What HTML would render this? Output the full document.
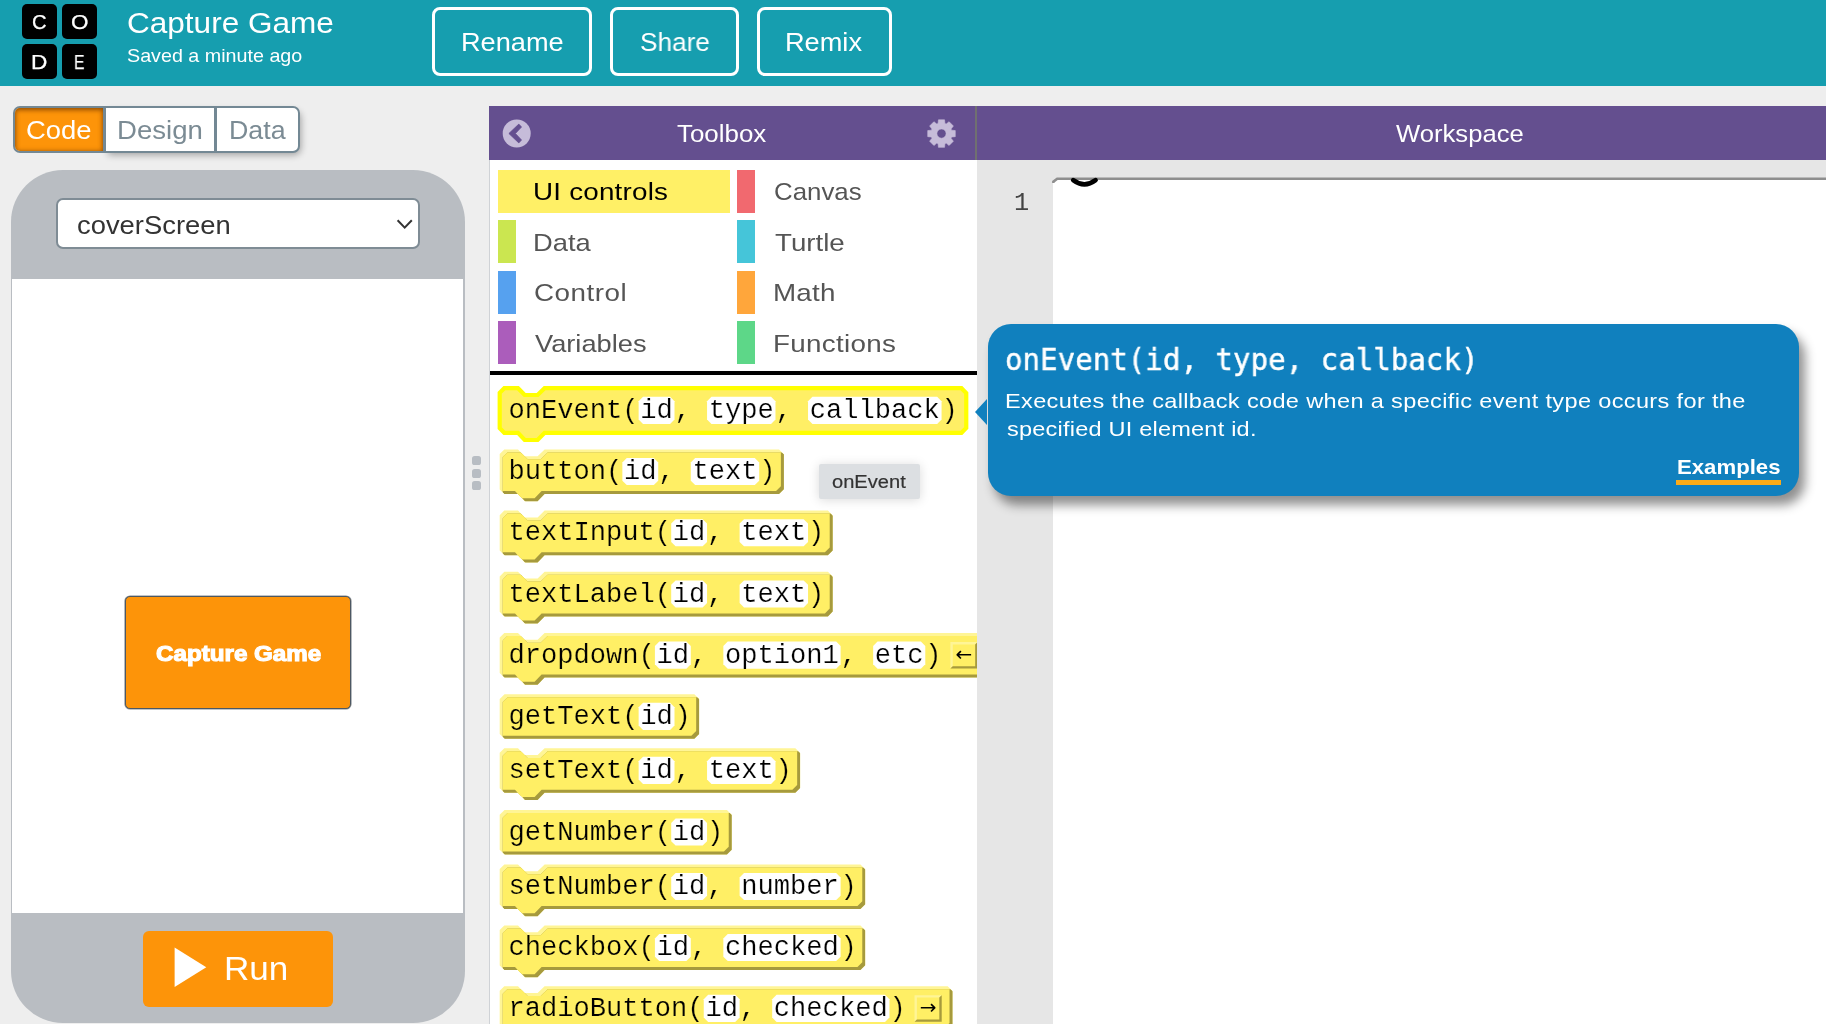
<!DOCTYPE html>
<html lang="en">
<head>
<meta charset="utf-8">
<title>Capture Game - App Lab</title>
<style>
html,body{margin:0;padding:0}
body{width:1826px;height:1024px;overflow:hidden;background:#eeeeee;position:relative;font-family:"Liberation Sans",sans-serif}
.abs{position:absolute}
.t{position:absolute;white-space:pre;line-height:1;display:block;transform-origin:0 0;will-change:transform}
.sans,.sansb{font-family:'Liberation Sans',sans-serif}
.mono{font-family:'Liberation Mono',monospace}
.dmono{font-family:'DejaVu Sans Mono','Liberation Mono',monospace}
.dsans{font-family:'DejaVu Sans','Liberation Sans',sans-serif}
#header{position:absolute;left:0;top:0;width:1826px;height:86.4px;background:#169eaf}
.logo-sq{position:absolute;width:35.7px;height:35.7px;background:#000;border-radius:5px}
.hbtn{position:absolute;top:7.1px;height:62.6px;border:3px solid #fff;border-radius:8px;box-sizing:content-box}
#tabs{position:absolute;left:13.2px;top:106.4px;width:286.6px;height:46.3px;box-sizing:border-box;border:2px solid #738894;border-radius:7px;background:#fff;overflow:hidden}
#tabshadow{position:absolute;left:106px;top:108px;width:193px;height:44px;border-radius:0 7px 7px 0;box-shadow:2px 3px 7px rgba(0,0,0,.32)}
#tab-code{position:absolute;left:0;top:0;width:88.2px;height:100%;background:#fd9409;box-shadow:inset 0 2px 5px rgba(105,50,0,.62),inset 0 0 5px rgba(105,50,0,.38)}
.tabdiv{position:absolute;top:0;width:2.4px;height:100%;background:#738894}
#phone{position:absolute;left:10.6px;top:169.7px;width:454.6px;height:852.9px;background:#b9bdc2;border-radius:52px}
#screen{position:absolute;left:12.4px;top:278.8px;width:451.1px;height:634px;background:#fff}
#sel{position:absolute;left:56.1px;top:198.4px;width:363.6px;height:50.2px;box-sizing:border-box;border:2px solid #7f8c95;border-radius:7px;background:#fff}
#capbtn{position:absolute;left:125.1px;top:596px;width:225.8px;height:113px;box-sizing:border-box;border:1px solid #4d5863;border-radius:5px;background:#fd9409;box-shadow:0 0 0 0.6px rgba(77,88,99,.7)}
#runbtn{position:absolute;left:143.3px;top:930.9px;width:189.4px;height:76px;border-radius:6px;background:#fd9409}
#tbhead{position:absolute;left:488.8px;top:106.2px;width:486.6px;height:54.5px;background:#644f8f}
#wshead{position:absolute;left:977px;top:106.2px;width:964px;height:54.5px;background:#644f8f}
#hdiv{position:absolute;left:975.2px;top:106.2px;width:2px;height:54.5px;background:#707070}
#toolbox{position:absolute;left:489.6px;top:160.2px;width:487.6px;height:864px;background:#fff;overflow:hidden}
#tbline{position:absolute;left:488.8px;top:160px;width:1.2px;height:864px;background:#cfd2d6}
#gutter{position:absolute;left:977.2px;top:160.2px;width:849px;height:864px;background:#e6e6e6}
#editor{position:absolute;left:1052.7px;top:180px;width:780px;height:850px;background:#fff}
.cat{position:absolute;height:43.1px}
.dot{position:absolute;left:472px;width:9.2px;height:9px;border-radius:2.6px;background:#b8bdc3}
#tip{position:absolute;left:987.6px;top:324px;width:811.4px;height:171.6px;border-radius:23px;background:#1080be;box-shadow:6px 9px 11px rgba(0,0,0,.44)}
#tiparrow{position:absolute;left:975.4px;top:398.8px;width:0;height:0;border-top:13.2px solid transparent;border-bottom:13.2px solid transparent;border-right:12.4px solid #1080be}
#minitip{position:absolute;left:819.2px;top:464.0px;width:100.4px;height:34.7px;background:#dcdfe2;border-radius:2px;box-shadow:0 1px 11px rgba(0,0,0,.15)}
</style>
</head>
<body>

<header id="header">
<div class="logo-sq" style="left:21.5px;top:3.8px"></div>
<span class="t sans " style="left:31.60px;top:12.20px;font-size:20.20px;color:#fff;transform:scaleX(0.9901);-webkit-text-stroke:0.25px #fff;">C</span>
<div class="logo-sq" style="left:61.6px;top:3.8px"></div>
<span class="t sans " style="left:70.79px;top:12.20px;font-size:20.20px;color:#fff;transform:scaleX(1.1130);-webkit-text-stroke:0.25px #fff;">O</span>
<div class="logo-sq" style="left:21.5px;top:43.5px"></div>
<span class="t sans " style="left:31.28px;top:51.60px;font-size:20.20px;color:#fff;transform:scaleX(1.1232);-webkit-text-stroke:0.25px #fff;">D</span>
<div class="logo-sq" style="left:61.6px;top:43.5px"></div>
<span class="t sans " style="left:73.84px;top:51.60px;font-size:20.20px;color:#fff;transform:scaleX(0.7812);-webkit-text-stroke:0.25px #fff;">E</span>
<span class="t sans " style="left:127.02px;top:8.25px;font-size:30.30px;color:#fff;transform:scaleX(1.0409);">Capture Game</span>
<span class="t sans " style="left:127.21px;top:47.42px;font-size:18.40px;color:#fff;transform:scaleX(1.0715);">Saved a minute ago</span>
<div class="hbtn" style="left:432.4px;width:153.8px"></div>
<span class="t sans " style="left:460.93px;top:29.07px;font-size:26.50px;color:#fff;transform:scaleX(1.0252);">Rename</span>
<div class="hbtn" style="left:609.8px;width:123.6px"></div>
<span class="t sans " style="left:639.92px;top:29.07px;font-size:26.50px;color:#fff;transform:scaleX(0.9873);">Share</span>
<div class="hbtn" style="left:757.0px;width:129.4px"></div>
<span class="t sans " style="left:785.43px;top:29.07px;font-size:26.50px;color:#fff;transform:scaleX(1.0251);">Remix</span>
</header>
<section id="visualizationColumn">
<div id="tabshadow"></div><div id="tabs"><div id="tab-code"></div><div class="tabdiv" style="left:88.2px"></div><div class="tabdiv" style="left:199.1px"></div></div>
<span class="t sans " style="left:26.13px;top:118.28px;font-size:25.30px;color:#fff;transform:scaleX(1.0838);">Code</span>
<span class="t sans " style="left:116.99px;top:118.28px;font-size:25.30px;color:#7b8b94;transform:scaleX(1.0900);">Design</span>
<span class="t sans " style="left:228.95px;top:118.28px;font-size:25.30px;color:#7b8b94;transform:scaleX(1.0599);">Data</span>
<div id="phone"></div><div id="screen"></div>
<div id="sel"></div>
<span class="t sans " style="left:76.74px;top:212.45px;font-size:26.40px;color:#333;transform:scaleX(1.0372);">coverScreen</span>
<svg class="abs" style="left:394px;top:216px" width="22" height="16" viewBox="394 216 22 16"><path d="M397.6 220.2 L404.7 227.6 L411.8 220.2" fill="none" stroke="#333" stroke-width="2"/></svg>
<div id="capbtn"></div>
<span class="t sansb " style="left:155.63px;top:642.52px;font-size:21.60px;color:#fff;font-weight:bold;transform:scaleX(1.1193);-webkit-text-stroke:1.1px #fff;">Capture Game</span>
<div id="runbtn"></div>
<svg class="abs" style="left:170px;top:944px" width="40" height="48" viewBox="170 944 40 48"><path d="M174.6 947.6 L206.3 967.3 L174.6 987 Z" fill="#fff"/></svg>
<span class="t sans " style="left:223.99px;top:952.46px;font-size:33.60px;color:#fff;transform:scaleX(1.0443);">Run</span>
<div class="dot" style="top:456.4px"></div>
<div class="dot" style="top:468.8px"></div>
<div class="dot" style="top:481.2px"></div>
</section>
<section id="codeWorkspace">
<div id="tbhead"></div><div id="wshead"></div><div id="hdiv"></div>
<span class="t sans " style="left:677.08px;top:122.18px;font-size:24.60px;color:#fff;transform:scaleX(1.0527);">Toolbox</span>
<span class="t sans " style="left:1396.04px;top:121.68px;font-size:24.60px;color:#fff;transform:scaleX(1.0423);">Workspace</span>
<svg class="abs" style="left:500px;top:116px" width="460" height="36" viewBox="500 116 460 36">
<circle cx="516.7" cy="133.5" r="14" fill="#c6bcd9"/>
<path d="M508.9 133.5 L518.8 124.1 L521.5 127 L515.4 133.5 L521.5 140 L518.8 142.9 Z" fill="#644f8f" stroke="#644f8f" stroke-width="0.8" stroke-linejoin="round"/>
<path d="M938.07 123.57 L938.45 119.83 L944.55 119.83 L944.93 123.57 L946.16 124.08 L949.08 121.71 L953.39 126.02 L951.02 128.94 L951.53 130.17 L955.27 130.55 L955.27 136.65 L951.53 137.03 L951.02 138.26 L953.39 141.18 L949.08 145.49 L946.16 143.12 L944.93 143.63 L944.55 147.37 L938.45 147.37 L938.07 143.63 L936.84 143.12 L933.92 145.49 L929.61 141.18 L931.98 138.26 L931.47 137.03 L927.73 136.65 L927.73 130.55 L931.47 130.17 L931.98 128.94 L929.61 126.02 L933.92 121.71 L936.84 124.08 Z M946.10 133.60 A4.6 4.6 0 1 0 936.90 133.60 A4.6 4.6 0 1 0 946.10 133.60 Z" fill="#c6bcd9" fill-rule="evenodd" stroke="#c6bcd9" stroke-width="0.6" stroke-linejoin="round"/>
</svg>
<div id="toolbox">
<div class="cat" style="left:8.1px;top:9.5px;width:232.3px;background:#fff066"></div>
<span class="t sans " style="left:43.52px;top:19.86px;font-size:24.80px;letter-spacing:0.195px;color:#000;transform:scaleX(1.1200);">UI controls</span>
<div class="cat" style="left:247.6px;top:9.5px;width:17.9px;background:#f1696f"></div>
<span class="t sans " style="left:284.41px;top:19.86px;font-size:24.80px;color:#555;transform:scaleX(1.0419);">Canvas</span>
<div class="cat" style="left:8.1px;top:60.0px;width:17.9px;background:#cbe650"></div>
<span class="t sans " style="left:43.42px;top:70.36px;font-size:24.80px;color:#555;transform:scaleX(1.1011);">Data</span>
<div class="cat" style="left:247.6px;top:60.0px;width:17.9px;background:#45c5d9"></div>
<span class="t sans " style="left:285.15px;top:70.36px;font-size:24.80px;color:#555;transform:scaleX(1.1169);">Turtle</span>
<div class="cat" style="left:8.1px;top:110.4px;width:17.9px;background:#56a1ef"></div>
<span class="t sans " style="left:44.21px;top:120.86px;font-size:24.80px;letter-spacing:0.464px;color:#555;transform:scaleX(1.1200);">Control</span>
<div class="cat" style="left:247.6px;top:110.4px;width:17.9px;background:#ffa63b"></div>
<span class="t sans " style="left:283.48px;top:120.86px;font-size:24.80px;letter-spacing:0.186px;color:#555;transform:scaleX(1.1200);">Math</span>
<div class="cat" style="left:8.1px;top:160.9px;width:17.9px;background:#ab5dbb"></div>
<span class="t sans " style="left:45.53px;top:171.36px;font-size:24.80px;color:#555;transform:scaleX(1.0981);">Variables</span>
<div class="cat" style="left:247.6px;top:160.9px;width:17.9px;background:#5dd788"></div>
<span class="t sans " style="left:283.48px;top:171.36px;font-size:24.80px;letter-spacing:0.266px;color:#555;transform:scaleX(1.1200);">Functions</span>
<div class="abs" style="left:0;top:210.9px;width:488px;height:3.9px;background:#000"></div>
</div>
<div id="tbline"></div>
<svg class="abs" style="left:489.6px;top:375px;will-change:transform" width="487.6" height="649" viewBox="489.6 375 487.6 649" font-family='"Liberation Mono",monospace' font-size="27.13">
<defs>
<clipPath id="c0"><path d="M499.30 428.20 L499.30 392.80 L503.90 388.20 L517.60 388.20 L524.30 395.00 L537.20 395.00 L544.20 388.20 L961.06 388.20 L965.86 393.00 L965.86 428.00 L961.06 432.80 L544.20 432.80 L537.20 440.00 L524.30 440.00 L517.60 432.80 L503.90 432.80 L499.30 428.20 Z"/></clipPath><clipPath id="d0"><path d="M499.30 428.20 L499.30 392.80 L503.90 388.20 L517.60 388.20 L524.30 395.00 L537.20 395.00 L544.20 388.20 L961.06 388.20 L965.86 393.00 L965.86 428.00 L961.06 432.80 L544.20 432.80 L537.20 440.00 L524.30 440.00 L517.60 432.80 L503.90 432.80 L499.30 428.20 Z" transform="translate(3.0,3.0)"/></clipPath>
<clipPath id="c1"><path d="M499.30 489.40 L499.30 454.00 L503.90 449.40 L517.60 449.40 L524.30 456.20 L537.20 456.20 L544.20 449.40 L778.68 449.40 L783.48 454.20 L783.48 489.20 L778.68 494.00 L544.20 494.00 L537.20 501.20 L524.30 501.20 L517.60 494.00 L503.90 494.00 L499.30 489.40 Z"/></clipPath><clipPath id="d1"><path d="M499.30 489.40 L499.30 454.00 L503.90 449.40 L517.60 449.40 L524.30 456.20 L537.20 456.20 L544.20 449.40 L778.68 449.40 L783.48 454.20 L783.48 489.20 L778.68 494.00 L544.20 494.00 L537.20 501.20 L524.30 501.20 L517.60 494.00 L503.90 494.00 L499.30 489.40 Z" transform="translate(3.0,3.0)"/></clipPath>
<clipPath id="c2"><path d="M499.30 550.60 L499.30 515.20 L503.90 510.60 L517.60 510.60 L524.30 517.40 L537.20 517.40 L544.20 510.60 L827.52 510.60 L832.32 515.40 L832.32 550.40 L827.52 555.20 L544.20 555.20 L537.20 562.40 L524.30 562.40 L517.60 555.20 L503.90 555.20 L499.30 550.60 Z"/></clipPath><clipPath id="d2"><path d="M499.30 550.60 L499.30 515.20 L503.90 510.60 L517.60 510.60 L524.30 517.40 L537.20 517.40 L544.20 510.60 L827.52 510.60 L832.32 515.40 L832.32 550.40 L827.52 555.20 L544.20 555.20 L537.20 562.40 L524.30 562.40 L517.60 555.20 L503.90 555.20 L499.30 550.60 Z" transform="translate(3.0,3.0)"/></clipPath>
<clipPath id="c3"><path d="M499.30 611.80 L499.30 576.40 L503.90 571.80 L517.60 571.80 L524.30 578.60 L537.20 578.60 L544.20 571.80 L827.52 571.80 L832.32 576.60 L832.32 611.60 L827.52 616.40 L544.20 616.40 L537.20 623.60 L524.30 623.60 L517.60 616.40 L503.90 616.40 L499.30 611.80 Z"/></clipPath><clipPath id="d3"><path d="M499.30 611.80 L499.30 576.40 L503.90 571.80 L517.60 571.80 L524.30 578.60 L537.20 578.60 L544.20 571.80 L827.52 571.80 L832.32 576.60 L832.32 611.60 L827.52 616.40 L544.20 616.40 L537.20 623.60 L524.30 623.60 L517.60 616.40 L503.90 616.40 L499.30 611.80 Z" transform="translate(3.0,3.0)"/></clipPath>
<clipPath id="c4"><path d="M499.30 673.00 L499.30 637.60 L503.90 633.00 L517.60 633.00 L524.30 639.80 L537.20 639.80 L544.20 633.00 L983.18 633.00 L987.98 637.80 L987.98 672.80 L983.18 677.60 L544.20 677.60 L537.20 684.80 L524.30 684.80 L517.60 677.60 L503.90 677.60 L499.30 673.00 Z"/></clipPath><clipPath id="d4"><path d="M499.30 673.00 L499.30 637.60 L503.90 633.00 L517.60 633.00 L524.30 639.80 L537.20 639.80 L544.20 633.00 L983.18 633.00 L987.98 637.80 L987.98 672.80 L983.18 677.60 L544.20 677.60 L537.20 684.80 L524.30 684.80 L517.60 677.60 L503.90 677.60 L499.30 673.00 Z" transform="translate(3.0,3.0)"/></clipPath>
<clipPath id="c5"><path d="M499.30 734.00 L499.30 699.00 L504.10 694.20 L693.98 694.20 L698.78 699.00 L698.78 734.00 L693.98 738.80 L504.10 738.80 L499.30 734.00 Z"/></clipPath><clipPath id="d5"><path d="M499.30 734.00 L499.30 699.00 L504.10 694.20 L693.98 694.20 L698.78 699.00 L698.78 734.00 L693.98 738.80 L504.10 738.80 L499.30 734.00 Z" transform="translate(3.0,3.0)"/></clipPath>
<clipPath id="c6"><path d="M499.30 788.20 L499.30 752.80 L503.90 748.20 L517.60 748.20 L524.30 755.00 L537.20 755.00 L544.20 748.20 L794.96 748.20 L799.76 753.00 L799.76 788.00 L794.96 792.80 L544.20 792.80 L537.20 800.00 L524.30 800.00 L517.60 792.80 L503.90 792.80 L499.30 788.20 Z"/></clipPath><clipPath id="d6"><path d="M499.30 788.20 L499.30 752.80 L503.90 748.20 L517.60 748.20 L524.30 755.00 L537.20 755.00 L544.20 748.20 L794.96 748.20 L799.76 753.00 L799.76 788.00 L794.96 792.80 L544.20 792.80 L537.20 800.00 L524.30 800.00 L517.60 792.80 L503.90 792.80 L499.30 788.20 Z" transform="translate(3.0,3.0)"/></clipPath>
<clipPath id="c7"><path d="M499.30 849.70 L499.30 814.70 L504.10 809.90 L726.54 809.90 L731.34 814.70 L731.34 849.70 L726.54 854.50 L504.10 854.50 L499.30 849.70 Z"/></clipPath><clipPath id="d7"><path d="M499.30 849.70 L499.30 814.70 L504.10 809.90 L726.54 809.90 L731.34 814.70 L731.34 849.70 L726.54 854.50 L504.10 854.50 L499.30 849.70 Z" transform="translate(3.0,3.0)"/></clipPath>
<clipPath id="c8"><path d="M499.30 904.40 L499.30 869.00 L503.90 864.40 L517.60 864.40 L524.30 871.20 L537.20 871.20 L544.20 864.40 L860.08 864.40 L864.88 869.20 L864.88 904.20 L860.08 909.00 L544.20 909.00 L537.20 916.20 L524.30 916.20 L517.60 909.00 L503.90 909.00 L499.30 904.40 Z"/></clipPath><clipPath id="d8"><path d="M499.30 904.40 L499.30 869.00 L503.90 864.40 L517.60 864.40 L524.30 871.20 L537.20 871.20 L544.20 864.40 L860.08 864.40 L864.88 869.20 L864.88 904.20 L860.08 909.00 L544.20 909.00 L537.20 916.20 L524.30 916.20 L517.60 909.00 L503.90 909.00 L499.30 904.40 Z" transform="translate(3.0,3.0)"/></clipPath>
<clipPath id="c9"><path d="M499.30 965.40 L499.30 930.00 L503.90 925.40 L517.60 925.40 L524.30 932.20 L537.20 932.20 L544.20 925.40 L860.08 925.40 L864.88 930.20 L864.88 965.20 L860.08 970.00 L544.20 970.00 L537.20 977.20 L524.30 977.20 L517.60 970.00 L503.90 970.00 L499.30 965.40 Z"/></clipPath><clipPath id="d9"><path d="M499.30 965.40 L499.30 930.00 L503.90 925.40 L517.60 925.40 L524.30 932.20 L537.20 932.20 L544.20 925.40 L860.08 925.40 L864.88 930.20 L864.88 965.20 L860.08 970.00 L544.20 970.00 L537.20 977.20 L524.30 977.20 L517.60 970.00 L503.90 970.00 L499.30 965.40 Z" transform="translate(3.0,3.0)"/></clipPath>
<clipPath id="c10"><path d="M499.30 1026.20 L499.30 990.80 L503.90 986.20 L517.60 986.20 L524.30 993.00 L537.20 993.00 L544.20 986.20 L947.32 986.20 L952.12 991.00 L952.12 1026.00 L947.32 1030.80 L544.20 1030.80 L537.20 1038.00 L524.30 1038.00 L517.60 1030.80 L503.90 1030.80 L499.30 1026.20 Z"/></clipPath><clipPath id="d10"><path d="M499.30 1026.20 L499.30 990.80 L503.90 986.20 L517.60 986.20 L524.30 993.00 L537.20 993.00 L544.20 986.20 L947.32 986.20 L952.12 991.00 L952.12 1026.00 L947.32 1030.80 L544.20 1030.80 L537.20 1038.00 L524.30 1038.00 L517.60 1030.80 L503.90 1030.80 L499.30 1026.20 Z" transform="translate(3.0,3.0)"/></clipPath>
</defs>
<g>
<path d="M499.30 428.20 L499.30 392.80 L503.90 388.20 L517.60 388.20 L524.30 395.00 L537.20 395.00 L544.20 388.20 L961.06 388.20 L965.86 393.00 L965.86 428.00 L961.06 432.80 L544.20 432.80 L537.20 440.00 L524.30 440.00 L517.60 432.80 L503.90 432.80 L499.30 428.20 Z" fill="#ffef65" stroke="#ffff00" stroke-width="4.2" stroke-linejoin="miter"/>
<text x="508.00" y="418.00" fill="#000" stroke="#ffef65" stroke-width="0.2" xml:space="preserve">onEvent(</text>
<path d="M642.64 396.80 L669.70 396.80 L674.10 401.20 L674.10 419.50 L669.70 423.90 L642.64 423.90 L638.24 419.50 L638.24 401.20 Z" fill="#fff"/>
<text x="639.89" y="418.00" fill="#000" stroke="#fff" stroke-width="0.2">id</text>
<text x="674.10" y="418.00" fill="#000" stroke="#ffef65" stroke-width="0.2" xml:space="preserve">, </text>
<path d="M711.06 396.80 L770.68 396.80 L775.08 401.20 L775.08 419.50 L770.68 423.90 L711.06 423.90 L706.66 419.50 L706.66 401.20 Z" fill="#fff"/>
<text x="708.31" y="418.00" fill="#000" stroke="#fff" stroke-width="0.2">type</text>
<text x="775.08" y="418.00" fill="#000" stroke="#ffef65" stroke-width="0.2" xml:space="preserve">, </text>
<path d="M812.04 396.80 L936.78 396.80 L941.18 401.20 L941.18 419.50 L936.78 423.90 L812.04 423.90 L807.64 419.50 L807.64 401.20 Z" fill="#fff"/>
<text x="809.29" y="418.00" fill="#000" stroke="#fff" stroke-width="0.2">callback</text>
<text x="941.18" y="418.00" fill="#000" stroke="#ffef65" stroke-width="0.2" xml:space="preserve">)</text>
</g>
<g>
<path d="M499.30 489.40 L499.30 454.00 L503.90 449.40 L517.60 449.40 L524.30 456.20 L537.20 456.20 L544.20 449.40 L778.68 449.40 L783.48 454.20 L783.48 489.20 L778.68 494.00 L544.20 494.00 L537.20 501.20 L524.30 501.20 L517.60 494.00 L503.90 494.00 L499.30 489.40 Z" fill="#fff596"/>
<g clip-path="url(#c1)"><path d="M499.30 489.40 L499.30 454.00 L503.90 449.40 L517.60 449.40 L524.30 456.20 L537.20 456.20 L544.20 449.40 L778.68 449.40 L783.48 454.20 L783.48 489.20 L778.68 494.00 L544.20 494.00 L537.20 501.20 L524.30 501.20 L517.60 494.00 L503.90 494.00 L499.30 489.40 Z" transform="translate(3.0,3.0)" fill="#a69a3d"/></g>
<g clip-path="url(#d1)"><path d="M499.30 489.40 L499.30 454.00 L503.90 449.40 L517.60 449.40 L524.30 456.20 L537.20 456.20 L544.20 449.40 L778.68 449.40 L783.48 454.20 L783.48 489.20 L778.68 494.00 L544.20 494.00 L537.20 501.20 L524.30 501.20 L517.60 494.00 L503.90 494.00 L499.30 489.40 Z" transform="translate(-3.0,-3.0)" fill="#ffef65"/></g>
<text x="508.00" y="479.20" fill="#000" stroke="#ffef65" stroke-width="0.2" xml:space="preserve">button(</text>
<path d="M626.36 458.00 L653.42 458.00 L657.82 462.40 L657.82 480.70 L653.42 485.10 L626.36 485.10 L621.96 480.70 L621.96 462.40 Z" fill="#fff"/>
<text x="623.61" y="479.20" fill="#000" stroke="#fff" stroke-width="0.2">id</text>
<text x="657.82" y="479.20" fill="#000" stroke="#ffef65" stroke-width="0.2" xml:space="preserve">, </text>
<path d="M694.78 458.00 L754.40 458.00 L758.80 462.40 L758.80 480.70 L754.40 485.10 L694.78 485.10 L690.38 480.70 L690.38 462.40 Z" fill="#fff"/>
<text x="692.03" y="479.20" fill="#000" stroke="#fff" stroke-width="0.2">text</text>
<text x="758.80" y="479.20" fill="#000" stroke="#ffef65" stroke-width="0.2" xml:space="preserve">)</text>
</g>
<g>
<path d="M499.30 550.60 L499.30 515.20 L503.90 510.60 L517.60 510.60 L524.30 517.40 L537.20 517.40 L544.20 510.60 L827.52 510.60 L832.32 515.40 L832.32 550.40 L827.52 555.20 L544.20 555.20 L537.20 562.40 L524.30 562.40 L517.60 555.20 L503.90 555.20 L499.30 550.60 Z" fill="#fff596"/>
<g clip-path="url(#c2)"><path d="M499.30 550.60 L499.30 515.20 L503.90 510.60 L517.60 510.60 L524.30 517.40 L537.20 517.40 L544.20 510.60 L827.52 510.60 L832.32 515.40 L832.32 550.40 L827.52 555.20 L544.20 555.20 L537.20 562.40 L524.30 562.40 L517.60 555.20 L503.90 555.20 L499.30 550.60 Z" transform="translate(3.0,3.0)" fill="#a69a3d"/></g>
<g clip-path="url(#d2)"><path d="M499.30 550.60 L499.30 515.20 L503.90 510.60 L517.60 510.60 L524.30 517.40 L537.20 517.40 L544.20 510.60 L827.52 510.60 L832.32 515.40 L832.32 550.40 L827.52 555.20 L544.20 555.20 L537.20 562.40 L524.30 562.40 L517.60 555.20 L503.90 555.20 L499.30 550.60 Z" transform="translate(-3.0,-3.0)" fill="#ffef65"/></g>
<text x="508.00" y="540.40" fill="#000" stroke="#ffef65" stroke-width="0.2" xml:space="preserve">textInput(</text>
<path d="M675.20 519.20 L702.26 519.20 L706.66 523.60 L706.66 541.90 L702.26 546.30 L675.20 546.30 L670.80 541.90 L670.80 523.60 Z" fill="#fff"/>
<text x="672.45" y="540.40" fill="#000" stroke="#fff" stroke-width="0.2">id</text>
<text x="706.66" y="540.40" fill="#000" stroke="#ffef65" stroke-width="0.2" xml:space="preserve">, </text>
<path d="M743.62 519.20 L803.24 519.20 L807.64 523.60 L807.64 541.90 L803.24 546.30 L743.62 546.30 L739.22 541.90 L739.22 523.60 Z" fill="#fff"/>
<text x="740.87" y="540.40" fill="#000" stroke="#fff" stroke-width="0.2">text</text>
<text x="807.64" y="540.40" fill="#000" stroke="#ffef65" stroke-width="0.2" xml:space="preserve">)</text>
</g>
<g>
<path d="M499.30 611.80 L499.30 576.40 L503.90 571.80 L517.60 571.80 L524.30 578.60 L537.20 578.60 L544.20 571.80 L827.52 571.80 L832.32 576.60 L832.32 611.60 L827.52 616.40 L544.20 616.40 L537.20 623.60 L524.30 623.60 L517.60 616.40 L503.90 616.40 L499.30 611.80 Z" fill="#fff596"/>
<g clip-path="url(#c3)"><path d="M499.30 611.80 L499.30 576.40 L503.90 571.80 L517.60 571.80 L524.30 578.60 L537.20 578.60 L544.20 571.80 L827.52 571.80 L832.32 576.60 L832.32 611.60 L827.52 616.40 L544.20 616.40 L537.20 623.60 L524.30 623.60 L517.60 616.40 L503.90 616.40 L499.30 611.80 Z" transform="translate(3.0,3.0)" fill="#a69a3d"/></g>
<g clip-path="url(#d3)"><path d="M499.30 611.80 L499.30 576.40 L503.90 571.80 L517.60 571.80 L524.30 578.60 L537.20 578.60 L544.20 571.80 L827.52 571.80 L832.32 576.60 L832.32 611.60 L827.52 616.40 L544.20 616.40 L537.20 623.60 L524.30 623.60 L517.60 616.40 L503.90 616.40 L499.30 611.80 Z" transform="translate(-3.0,-3.0)" fill="#ffef65"/></g>
<text x="508.00" y="601.60" fill="#000" stroke="#ffef65" stroke-width="0.2" xml:space="preserve">textLabel(</text>
<path d="M675.20 580.40 L702.26 580.40 L706.66 584.80 L706.66 603.10 L702.26 607.50 L675.20 607.50 L670.80 603.10 L670.80 584.80 Z" fill="#fff"/>
<text x="672.45" y="601.60" fill="#000" stroke="#fff" stroke-width="0.2">id</text>
<text x="706.66" y="601.60" fill="#000" stroke="#ffef65" stroke-width="0.2" xml:space="preserve">, </text>
<path d="M743.62 580.40 L803.24 580.40 L807.64 584.80 L807.64 603.10 L803.24 607.50 L743.62 607.50 L739.22 603.10 L739.22 584.80 Z" fill="#fff"/>
<text x="740.87" y="601.60" fill="#000" stroke="#fff" stroke-width="0.2">text</text>
<text x="807.64" y="601.60" fill="#000" stroke="#ffef65" stroke-width="0.2" xml:space="preserve">)</text>
</g>
<g>
<path d="M499.30 673.00 L499.30 637.60 L503.90 633.00 L517.60 633.00 L524.30 639.80 L537.20 639.80 L544.20 633.00 L983.18 633.00 L987.98 637.80 L987.98 672.80 L983.18 677.60 L544.20 677.60 L537.20 684.80 L524.30 684.80 L517.60 677.60 L503.90 677.60 L499.30 673.00 Z" fill="#fff596"/>
<g clip-path="url(#c4)"><path d="M499.30 673.00 L499.30 637.60 L503.90 633.00 L517.60 633.00 L524.30 639.80 L537.20 639.80 L544.20 633.00 L983.18 633.00 L987.98 637.80 L987.98 672.80 L983.18 677.60 L544.20 677.60 L537.20 684.80 L524.30 684.80 L517.60 677.60 L503.90 677.60 L499.30 673.00 Z" transform="translate(3.0,3.0)" fill="#a69a3d"/></g>
<g clip-path="url(#d4)"><path d="M499.30 673.00 L499.30 637.60 L503.90 633.00 L517.60 633.00 L524.30 639.80 L537.20 639.80 L544.20 633.00 L983.18 633.00 L987.98 637.80 L987.98 672.80 L983.18 677.60 L544.20 677.60 L537.20 684.80 L524.30 684.80 L517.60 677.60 L503.90 677.60 L499.30 673.00 Z" transform="translate(-3.0,-3.0)" fill="#ffef65"/></g>
<text x="508.00" y="662.80" fill="#000" stroke="#ffef65" stroke-width="0.2" xml:space="preserve">dropdown(</text>
<path d="M658.92 641.60 L685.98 641.60 L690.38 646.00 L690.38 664.30 L685.98 668.70 L658.92 668.70 L654.52 664.30 L654.52 646.00 Z" fill="#fff"/>
<text x="656.17" y="662.80" fill="#000" stroke="#fff" stroke-width="0.2">id</text>
<text x="690.38" y="662.80" fill="#000" stroke="#ffef65" stroke-width="0.2" xml:space="preserve">, </text>
<path d="M727.34 641.60 L835.80 641.60 L840.20 646.00 L840.20 664.30 L835.80 668.70 L727.34 668.70 L722.94 664.30 L722.94 646.00 Z" fill="#fff"/>
<text x="724.59" y="662.80" fill="#000" stroke="#fff" stroke-width="0.2">option1</text>
<text x="840.20" y="662.80" fill="#000" stroke="#ffef65" stroke-width="0.2" xml:space="preserve">, </text>
<path d="M877.16 641.60 L920.50 641.60 L924.90 646.00 L924.90 664.30 L920.50 668.70 L877.16 668.70 L872.76 664.30 L872.76 646.00 Z" fill="#fff"/>
<text x="874.41" y="662.80" fill="#000" stroke="#fff" stroke-width="0.2">etc</text>
<text x="924.90" y="662.80" fill="#000" stroke="#ffef65" stroke-width="0.2" xml:space="preserve">)</text>
<rect x="949.98" y="642.00" width="27.20" height="26.60" fill="#ffef65"/>
<path d="M949.98 668.60 L949.98 642.00 L977.18 642.00 L974.78 644.40 L952.38 644.40 L952.38 666.20 Z" fill="#fff596"/>
<path d="M949.98 668.60 L977.18 668.60 L977.18 642.00 L974.78 644.40 L974.78 666.20 L952.38 666.20 Z" fill="#a69a3d"/>
<text x="963.58" y="661.20" text-anchor="middle" font-family='"DejaVu Sans",sans-serif' font-size="20" fill="#000">←</text>
</g>
<g>
<path d="M499.30 734.00 L499.30 699.00 L504.10 694.20 L693.98 694.20 L698.78 699.00 L698.78 734.00 L693.98 738.80 L504.10 738.80 L499.30 734.00 Z" fill="#fff596"/>
<g clip-path="url(#c5)"><path d="M499.30 734.00 L499.30 699.00 L504.10 694.20 L693.98 694.20 L698.78 699.00 L698.78 734.00 L693.98 738.80 L504.10 738.80 L499.30 734.00 Z" transform="translate(3.0,3.0)" fill="#a69a3d"/></g>
<g clip-path="url(#d5)"><path d="M499.30 734.00 L499.30 699.00 L504.10 694.20 L693.98 694.20 L698.78 699.00 L698.78 734.00 L693.98 738.80 L504.10 738.80 L499.30 734.00 Z" transform="translate(-3.0,-3.0)" fill="#ffef65"/></g>
<text x="508.00" y="724.00" fill="#000" stroke="#ffef65" stroke-width="0.2" xml:space="preserve">getText(</text>
<path d="M642.64 702.80 L669.70 702.80 L674.10 707.20 L674.10 725.50 L669.70 729.90 L642.64 729.90 L638.24 725.50 L638.24 707.20 Z" fill="#fff"/>
<text x="639.89" y="724.00" fill="#000" stroke="#fff" stroke-width="0.2">id</text>
<text x="674.10" y="724.00" fill="#000" stroke="#ffef65" stroke-width="0.2" xml:space="preserve">)</text>
</g>
<g>
<path d="M499.30 788.20 L499.30 752.80 L503.90 748.20 L517.60 748.20 L524.30 755.00 L537.20 755.00 L544.20 748.20 L794.96 748.20 L799.76 753.00 L799.76 788.00 L794.96 792.80 L544.20 792.80 L537.20 800.00 L524.30 800.00 L517.60 792.80 L503.90 792.80 L499.30 788.20 Z" fill="#fff596"/>
<g clip-path="url(#c6)"><path d="M499.30 788.20 L499.30 752.80 L503.90 748.20 L517.60 748.20 L524.30 755.00 L537.20 755.00 L544.20 748.20 L794.96 748.20 L799.76 753.00 L799.76 788.00 L794.96 792.80 L544.20 792.80 L537.20 800.00 L524.30 800.00 L517.60 792.80 L503.90 792.80 L499.30 788.20 Z" transform="translate(3.0,3.0)" fill="#a69a3d"/></g>
<g clip-path="url(#d6)"><path d="M499.30 788.20 L499.30 752.80 L503.90 748.20 L517.60 748.20 L524.30 755.00 L537.20 755.00 L544.20 748.20 L794.96 748.20 L799.76 753.00 L799.76 788.00 L794.96 792.80 L544.20 792.80 L537.20 800.00 L524.30 800.00 L517.60 792.80 L503.90 792.80 L499.30 788.20 Z" transform="translate(-3.0,-3.0)" fill="#ffef65"/></g>
<text x="508.00" y="778.00" fill="#000" stroke="#ffef65" stroke-width="0.2" xml:space="preserve">setText(</text>
<path d="M642.64 756.80 L669.70 756.80 L674.10 761.20 L674.10 779.50 L669.70 783.90 L642.64 783.90 L638.24 779.50 L638.24 761.20 Z" fill="#fff"/>
<text x="639.89" y="778.00" fill="#000" stroke="#fff" stroke-width="0.2">id</text>
<text x="674.10" y="778.00" fill="#000" stroke="#ffef65" stroke-width="0.2" xml:space="preserve">, </text>
<path d="M711.06 756.80 L770.68 756.80 L775.08 761.20 L775.08 779.50 L770.68 783.90 L711.06 783.90 L706.66 779.50 L706.66 761.20 Z" fill="#fff"/>
<text x="708.31" y="778.00" fill="#000" stroke="#fff" stroke-width="0.2">text</text>
<text x="775.08" y="778.00" fill="#000" stroke="#ffef65" stroke-width="0.2" xml:space="preserve">)</text>
</g>
<g>
<path d="M499.30 849.70 L499.30 814.70 L504.10 809.90 L726.54 809.90 L731.34 814.70 L731.34 849.70 L726.54 854.50 L504.10 854.50 L499.30 849.70 Z" fill="#fff596"/>
<g clip-path="url(#c7)"><path d="M499.30 849.70 L499.30 814.70 L504.10 809.90 L726.54 809.90 L731.34 814.70 L731.34 849.70 L726.54 854.50 L504.10 854.50 L499.30 849.70 Z" transform="translate(3.0,3.0)" fill="#a69a3d"/></g>
<g clip-path="url(#d7)"><path d="M499.30 849.70 L499.30 814.70 L504.10 809.90 L726.54 809.90 L731.34 814.70 L731.34 849.70 L726.54 854.50 L504.10 854.50 L499.30 849.70 Z" transform="translate(-3.0,-3.0)" fill="#ffef65"/></g>
<text x="508.00" y="839.70" fill="#000" stroke="#ffef65" stroke-width="0.2" xml:space="preserve">getNumber(</text>
<path d="M675.20 818.50 L702.26 818.50 L706.66 822.90 L706.66 841.20 L702.26 845.60 L675.20 845.60 L670.80 841.20 L670.80 822.90 Z" fill="#fff"/>
<text x="672.45" y="839.70" fill="#000" stroke="#fff" stroke-width="0.2">id</text>
<text x="706.66" y="839.70" fill="#000" stroke="#ffef65" stroke-width="0.2" xml:space="preserve">)</text>
</g>
<g>
<path d="M499.30 904.40 L499.30 869.00 L503.90 864.40 L517.60 864.40 L524.30 871.20 L537.20 871.20 L544.20 864.40 L860.08 864.40 L864.88 869.20 L864.88 904.20 L860.08 909.00 L544.20 909.00 L537.20 916.20 L524.30 916.20 L517.60 909.00 L503.90 909.00 L499.30 904.40 Z" fill="#fff596"/>
<g clip-path="url(#c8)"><path d="M499.30 904.40 L499.30 869.00 L503.90 864.40 L517.60 864.40 L524.30 871.20 L537.20 871.20 L544.20 864.40 L860.08 864.40 L864.88 869.20 L864.88 904.20 L860.08 909.00 L544.20 909.00 L537.20 916.20 L524.30 916.20 L517.60 909.00 L503.90 909.00 L499.30 904.40 Z" transform="translate(3.0,3.0)" fill="#a69a3d"/></g>
<g clip-path="url(#d8)"><path d="M499.30 904.40 L499.30 869.00 L503.90 864.40 L517.60 864.40 L524.30 871.20 L537.20 871.20 L544.20 864.40 L860.08 864.40 L864.88 869.20 L864.88 904.20 L860.08 909.00 L544.20 909.00 L537.20 916.20 L524.30 916.20 L517.60 909.00 L503.90 909.00 L499.30 904.40 Z" transform="translate(-3.0,-3.0)" fill="#ffef65"/></g>
<text x="508.00" y="894.20" fill="#000" stroke="#ffef65" stroke-width="0.2" xml:space="preserve">setNumber(</text>
<path d="M675.20 873.00 L702.26 873.00 L706.66 877.40 L706.66 895.70 L702.26 900.10 L675.20 900.10 L670.80 895.70 L670.80 877.40 Z" fill="#fff"/>
<text x="672.45" y="894.20" fill="#000" stroke="#fff" stroke-width="0.2">id</text>
<text x="706.66" y="894.20" fill="#000" stroke="#ffef65" stroke-width="0.2" xml:space="preserve">, </text>
<path d="M743.62 873.00 L835.80 873.00 L840.20 877.40 L840.20 895.70 L835.80 900.10 L743.62 900.10 L739.22 895.70 L739.22 877.40 Z" fill="#fff"/>
<text x="740.87" y="894.20" fill="#000" stroke="#fff" stroke-width="0.2">number</text>
<text x="840.20" y="894.20" fill="#000" stroke="#ffef65" stroke-width="0.2" xml:space="preserve">)</text>
</g>
<g>
<path d="M499.30 965.40 L499.30 930.00 L503.90 925.40 L517.60 925.40 L524.30 932.20 L537.20 932.20 L544.20 925.40 L860.08 925.40 L864.88 930.20 L864.88 965.20 L860.08 970.00 L544.20 970.00 L537.20 977.20 L524.30 977.20 L517.60 970.00 L503.90 970.00 L499.30 965.40 Z" fill="#fff596"/>
<g clip-path="url(#c9)"><path d="M499.30 965.40 L499.30 930.00 L503.90 925.40 L517.60 925.40 L524.30 932.20 L537.20 932.20 L544.20 925.40 L860.08 925.40 L864.88 930.20 L864.88 965.20 L860.08 970.00 L544.20 970.00 L537.20 977.20 L524.30 977.20 L517.60 970.00 L503.90 970.00 L499.30 965.40 Z" transform="translate(3.0,3.0)" fill="#a69a3d"/></g>
<g clip-path="url(#d9)"><path d="M499.30 965.40 L499.30 930.00 L503.90 925.40 L517.60 925.40 L524.30 932.20 L537.20 932.20 L544.20 925.40 L860.08 925.40 L864.88 930.20 L864.88 965.20 L860.08 970.00 L544.20 970.00 L537.20 977.20 L524.30 977.20 L517.60 970.00 L503.90 970.00 L499.30 965.40 Z" transform="translate(-3.0,-3.0)" fill="#ffef65"/></g>
<text x="508.00" y="955.20" fill="#000" stroke="#ffef65" stroke-width="0.2" xml:space="preserve">checkbox(</text>
<path d="M658.92 934.00 L685.98 934.00 L690.38 938.40 L690.38 956.70 L685.98 961.10 L658.92 961.10 L654.52 956.70 L654.52 938.40 Z" fill="#fff"/>
<text x="656.17" y="955.20" fill="#000" stroke="#fff" stroke-width="0.2">id</text>
<text x="690.38" y="955.20" fill="#000" stroke="#ffef65" stroke-width="0.2" xml:space="preserve">, </text>
<path d="M727.34 934.00 L835.80 934.00 L840.20 938.40 L840.20 956.70 L835.80 961.10 L727.34 961.10 L722.94 956.70 L722.94 938.40 Z" fill="#fff"/>
<text x="724.59" y="955.20" fill="#000" stroke="#fff" stroke-width="0.2">checked</text>
<text x="840.20" y="955.20" fill="#000" stroke="#ffef65" stroke-width="0.2" xml:space="preserve">)</text>
</g>
<g>
<path d="M499.30 1026.20 L499.30 990.80 L503.90 986.20 L517.60 986.20 L524.30 993.00 L537.20 993.00 L544.20 986.20 L947.32 986.20 L952.12 991.00 L952.12 1026.00 L947.32 1030.80 L544.20 1030.80 L537.20 1038.00 L524.30 1038.00 L517.60 1030.80 L503.90 1030.80 L499.30 1026.20 Z" fill="#fff596"/>
<g clip-path="url(#c10)"><path d="M499.30 1026.20 L499.30 990.80 L503.90 986.20 L517.60 986.20 L524.30 993.00 L537.20 993.00 L544.20 986.20 L947.32 986.20 L952.12 991.00 L952.12 1026.00 L947.32 1030.80 L544.20 1030.80 L537.20 1038.00 L524.30 1038.00 L517.60 1030.80 L503.90 1030.80 L499.30 1026.20 Z" transform="translate(3.0,3.0)" fill="#a69a3d"/></g>
<g clip-path="url(#d10)"><path d="M499.30 1026.20 L499.30 990.80 L503.90 986.20 L517.60 986.20 L524.30 993.00 L537.20 993.00 L544.20 986.20 L947.32 986.20 L952.12 991.00 L952.12 1026.00 L947.32 1030.80 L544.20 1030.80 L537.20 1038.00 L524.30 1038.00 L517.60 1030.80 L503.90 1030.80 L499.30 1026.20 Z" transform="translate(-3.0,-3.0)" fill="#ffef65"/></g>
<text x="508.00" y="1016.00" fill="#000" stroke="#ffef65" stroke-width="0.2" xml:space="preserve">radioButton(</text>
<path d="M707.76 994.80 L734.82 994.80 L739.22 999.20 L739.22 1017.50 L734.82 1021.90 L707.76 1021.90 L703.36 1017.50 L703.36 999.20 Z" fill="#fff"/>
<text x="705.01" y="1016.00" fill="#000" stroke="#fff" stroke-width="0.2">id</text>
<text x="739.22" y="1016.00" fill="#000" stroke="#ffef65" stroke-width="0.2" xml:space="preserve">, </text>
<path d="M776.18 994.80 L884.64 994.80 L889.04 999.20 L889.04 1017.50 L884.64 1021.90 L776.18 1021.90 L771.78 1017.50 L771.78 999.20 Z" fill="#fff"/>
<text x="773.43" y="1016.00" fill="#000" stroke="#fff" stroke-width="0.2">checked</text>
<text x="889.04" y="1016.00" fill="#000" stroke="#ffef65" stroke-width="0.2" xml:space="preserve">)</text>
<rect x="914.12" y="995.20" width="27.20" height="26.60" fill="#ffef65"/>
<path d="M914.12 1021.80 L914.12 995.20 L941.32 995.20 L938.92 997.60 L916.52 997.60 L916.52 1019.40 Z" fill="#fff596"/>
<path d="M914.12 1021.80 L941.32 1021.80 L941.32 995.20 L938.92 997.60 L938.92 1019.40 L916.52 1019.40 Z" fill="#a69a3d"/>
<text x="927.72" y="1014.40" text-anchor="middle" font-family='"DejaVu Sans",sans-serif' font-size="20" fill="#000">→</text>
</g>
</svg>
<div id="gutter"></div><div id="editor"></div>
<svg class="abs" style="left:1048px;top:172px" width="778" height="20" viewBox="1048 172 778 20"><path d="M1053.4 183 L1053.4 181.6 L1057.2 178.7 L1830 178.7" fill="none" stroke="#8e8e8e" stroke-width="2.6"/><path d="M1073.2 180.2 Q1084.4 188.6 1095.6 180.2" fill="none" stroke="#000" stroke-width="4.6" stroke-linecap="round"/></svg>
<span class="t mono " style="left:1013.63px;top:190.61px;font-size:25.30px;color:#444;transform:scaleX(1.0000);">1</span>
</section>
<aside id="tooltips">
<div id="minitip"></div>
<span class="t sans " style="left:831.90px;top:472.05px;font-size:19.20px;color:#333;transform:scaleX(1.0474);-webkit-text-stroke:0.2px #333;">onEvent</span>
<div id="tip"></div><div id="tiparrow"></div>
<span class="t dmono " style="left:1004.81px;top:344.98px;font-size:30.40px;color:#fff;transform:scaleX(0.9585);-webkit-text-stroke:0.45px #fff;">onEvent(id, type, callback)</span>
<span class="t sans " style="left:1005.42px;top:389.52px;font-size:21.00px;letter-spacing:0.319px;color:#fff;transform:scaleX(1.1200);">Executes the callback code when a specific event type occurs for the</span>
<span class="t sans " style="left:1006.65px;top:417.62px;font-size:21.00px;letter-spacing:0.193px;color:#fff;transform:scaleX(1.1200);">specified UI element id.</span>
<span class="t sansb " style="left:1676.96px;top:457.36px;font-size:20.60px;color:#fff;font-weight:bold;transform:scaleX(1.0761);">Examples</span>
<div class="abs" style="left:1676.4px;top:479.6px;width:104.8px;height:5px;background:#fbab18"></div>
</aside>
</body></html>
